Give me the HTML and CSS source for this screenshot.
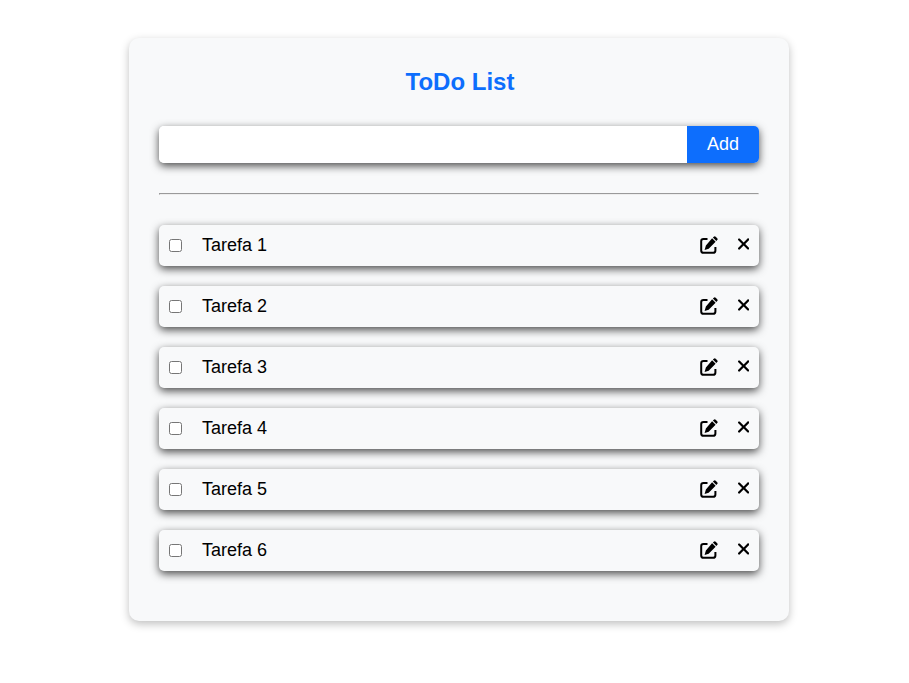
FILE: index.html
```html
<!DOCTYPE html>
<html lang="pt-BR">
<head>
<meta charset="UTF-8">
<title>ToDo List</title>
<link rel="stylesheet" href="styles.css">
</head>
<body>
<svg class="sprite" aria-hidden="true">
<symbol id="edit" viewBox="0 0 18 18"><path d="M7.500 2.900H3.500Q1.200 2.900 1.200 5.200v9.200q0 2.400 2.300 2.400h9.500q2.400 0 2.400-2.400V11" fill="none" stroke="#000" stroke-width="2"/><path d="M12.100 2.300l3.500 3.500-6.900 7-4.100 1.300 1.300-4.500zM12.900 1.600l.9-.9q1-.9 1.900 0l1.500 1.500q.9.900 0 1.900l-.9.900z"/></symbol>
<symbol id="close" viewBox="0 0 320 512"><path d="M310.600 150.600c12.500-12.500 12.500-32.800 0-45.300s-32.800-12.500-45.300 0L160 210.700 54.600 105.400c-12.500-12.500-32.800-12.500-45.300 0s-12.500 32.800 0 45.300L114.700 256 9.400 361.400c-12.500 12.500-12.500 32.800 0 45.300s32.800 12.500 45.300 0L160 301.300l105.400 105.300c12.500 12.500 32.800 12.500 45.300 0s12.500-32.800 0-45.300L205.300 256z"/></symbol>
</svg>
<main class="container">
<h1>ToDo List</h1>
<form class="add"><input type="text" class="field"><button type="button" class="btn">Add</button></form>
<hr>
<div class="tasks">
<div class="task"><input type="checkbox"><span>Tarefa 1</span><svg class="edit"><use href="#edit"/></svg><svg class="close"><use href="#close"/></svg></div>
<div class="task"><input type="checkbox"><span>Tarefa 2</span><svg class="edit"><use href="#edit"/></svg><svg class="close"><use href="#close"/></svg></div>
<div class="task"><input type="checkbox"><span>Tarefa 3</span><svg class="edit"><use href="#edit"/></svg><svg class="close"><use href="#close"/></svg></div>
<div class="task"><input type="checkbox"><span>Tarefa 4</span><svg class="edit"><use href="#edit"/></svg><svg class="close"><use href="#close"/></svg></div>
<div class="task"><input type="checkbox"><span>Tarefa 5</span><svg class="edit"><use href="#edit"/></svg><svg class="close"><use href="#close"/></svg></div>
<div class="task"><input type="checkbox"><span>Tarefa 6</span><svg class="edit"><use href="#edit"/></svg><svg class="close"><use href="#close"/></svg></div>
</div>
</main>
</body>
</html>
```
FILE: styles.css
```css
* { box-sizing: border-box; margin: 0; padding: 0; }
body { min-height: 683px; padding: 38px 0 0 129px; font-family: "Liberation Sans", Arial, sans-serif; background: #fff; }
.sprite { display: none; }
.container { width: 660px; height: 583px; padding: 30px; background: #f8f9fa; border-radius: 10px; box-shadow: 0 3px 8px rgba(0,0,0,.25); }
h1 { font-size: 24px; line-height: 28px; color: #0d6efd; text-align: center; text-indent: 2px; margin-bottom: 30px; }
.add { display: flex; height: 37px; border-radius: 5px; box-shadow: 0 3px 8px rgba(0,0,0,.7); }
.field { flex: 1; border: 0; outline: 0; background: #fff; border-radius: 5px 0 0 5px; font-size: 18px; padding: 8px; }
.btn { width: 72px; border: 0; background: #0d6efd; color: #fff; font: 18px "Liberation Sans", Arial, sans-serif; border-radius: 0 5px 5px 0; }
hr { margin: 30px 0; }
.tasks { display: grid; gap: 20px; }
.task { display: flex; align-items: center; height: 41px; padding: 0 10px; border-radius: 5px; background: #f8f9fa; box-shadow: 0 3px 8px rgba(0,0,0,.7); font-size: 18px; }
.task input { width: 13px; height: 13px; margin-right: 20px; }
.task span { flex: 1; }
.edit { width: 18px; height: 18px; margin: 0 20px 2px 0; }
.close { width: 11.250px; height: 18px; margin-bottom: 3px; }
```
